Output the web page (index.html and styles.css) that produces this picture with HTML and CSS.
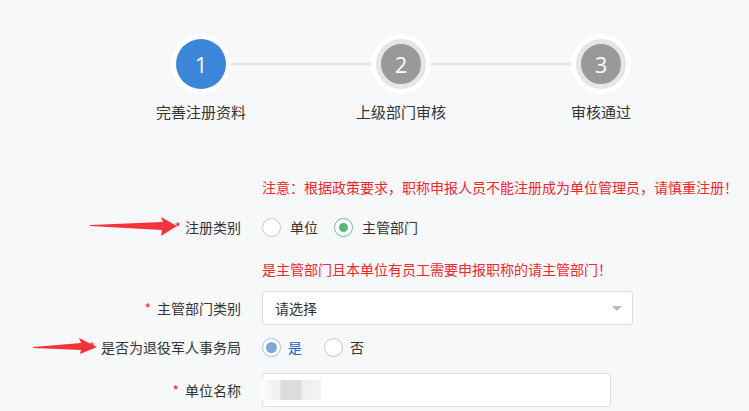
FILE: index.html
```html
<!DOCTYPE html>
<html lang="zh-CN">
<head>
    <meta charset="UTF-8">
    <meta name="viewport" content="width=device-width, initial-scale=1.0">
    <title>注册</title>
    <link rel="stylesheet" href="styles.css">
</head>
<body>
    <div class="steps">
        <div class="steps-track">
            <div class="step-dot active">1</div>
            <div class="step-line"></div>
            <div class="step-dot">2</div>
            <div class="step-line"></div>
            <div class="step-dot">3</div>
        </div>
        <div class="steps-labels">
            <span>完善注册资料</span>
            <span>上级部门审核</span>
            <span>审核通过</span>
        </div>
    </div>

    <form class="reg-form">
        <p class="tip tip-notice">注意：根据政策要求，职称申报人员不能注册成为单位管理员，请慎重注册！</p>

        <div class="form-row row-type">
            <label class="form-label"><i class="star-top">*</i>注册类别</label>
            <div class="form-control radios">
                <span class="radio"><span class="radio-dot"></span>单位</span>
                <span class="radio checked-green"><span class="radio-dot"></span>主管部门</span>
            </div>
        </div>

        <p class="tip tip-hint">是主管部门且本单位有员工需要申报职称的请主管部门！</p>

        <div class="form-row row-select">
            <label class="form-label"><i>*</i>主管部门类别</label>
            <div class="form-control">
                <div class="select-box">
                    <span>请选择</span>
                    <span class="caret"></span>
                </div>
            </div>
        </div>

        <div class="form-row row-veteran">
            <label class="form-label"><i>*</i>是否为退役军人事务局</label>
            <div class="form-control radios radios-wide">
                <span class="radio checked-blue"><span class="radio-dot"></span>是</span>
                <span class="radio"><span class="radio-dot"></span>否</span>
            </div>
        </div>

        <div class="form-row row-name">
            <label class="form-label"><i>*</i>单位名称</label>
            <div class="form-control">
                <div class="text-box">
                    <span class="blur"></span>
                </div>
            </div>
        </div>
    </form>

    <!-- annotation arrows -->
    <svg class="arrow arrow-1" width="100" height="30" viewBox="0 0 100 30">
        <polygon points="0,9 73,6 71,1 87,10 71,20 72,14 0,10" fill="#f5333a"/>
    </svg>
    <svg class="arrow arrow-2" width="80" height="30" viewBox="0 0 80 30">
        <polygon points="0,11 48,7 46,2 64,11 47,18 48,14 0,12" fill="#f5333a"/>
    </svg>
</body>
</html>
```

FILE: styles.css
```css
:root {
    --blue: #3b86d9;
    --gray: #999;
    --ring: #e6e6e6;
    --red: #f2262f;
    --text: #333;
    --border: #dcdcdc;
}

* {
    margin: 0;
    padding: 0;
    box-sizing: border-box;
}

body {
    position: relative;
    background-color: #f7f8fa;
    color: var(--text);
    font-family: "Noto Sans CJK SC", "Noto Sans", sans-serif;
    font-size: 14px;
    line-height: 20px;
    width: 749px;
    height: 411px;
    overflow: hidden;
}

/* steps */
.steps {
    width: 600px;
    margin-left: 101px;
    padding-top: 34px;
}

.steps-track {
    display: flex;
    align-items: center;
    padding: 0 70px;
    height: 60px;
}

.step-dot {
    width: 50px;
    height: 50px;
    margin: 5px;
    border-radius: 50%;
    background-color: var(--gray);
    border: 5px solid var(--ring);
    box-shadow: 0 0 0 5px #fff;
    color: #fff;
    font-family: "Open Sans", "Noto Sans", sans-serif;
    font-size: 22px;
    display: flex;
    justify-content: center;
    align-items: center;
}

.step-dot.active {
    background-color: var(--blue);
    border: none;
}

.step-line {
    flex: 1;
    height: 2px;
    background-color: #e3e3e5;
}

.steps-labels {
    display: grid;
    grid-template-columns: repeat(3, 200px);
    margin-top: 8px;
    font-size: 15px;
    text-align: center;
}

/* form */
.reg-form {
    margin-top: 55px;
}

.tip {
    color: var(--red);
    padding-left: 262px;
    white-space: nowrap;
}

.form-row {
    display: flex;
    align-items: center;
    height: 34px;
}

.form-label {
    width: 241px;
    text-align: right;
    white-space: nowrap;
}

.form-label i {
    font-style: normal;
    color: var(--red);
    margin-right: 6px;
}

.form-label .star-top {
    position: relative;
    z-index: 1;
    margin-right: 4px;
}

.form-control {
    margin-left: 21px;
}

.row-type {
    margin-top: 13px;
}

.tip-hint {
    margin-top: 15px;
}

.row-select {
    margin-top: 12px;
}

.row-veteran {
    margin-top: 5px;
}

.row-name {
    margin-top: 9px;
}

/* radios */
.radios {
    display: flex;
    gap: 16px;
}

.radio {
    display: flex;
    align-items: center;
    gap: 9px;
}

.radios-wide {
    gap: 22px;
}

.radios-wide .radio {
    gap: 7px;
}

.radio-dot {
    width: 19px;
    height: 19px;
    border-radius: 50%;
    border: 1px solid #c8c8c8;
    background-color: #fff;
    display: flex;
    justify-content: center;
    align-items: center;
}

.checked-green .radio-dot {
    border-color: #6cc38a;
}

.checked-green .radio-dot::after {
    content: "";
    width: 9px;
    height: 9px;
    border-radius: 50%;
    background-color: #5cb87a;
}

.checked-blue {
    color: #1d5fc9;
}

.checked-blue .radio-dot {
    border-color: #a3bfe6;
}

.checked-blue .radio-dot::after {
    content: "";
    width: 11px;
    height: 11px;
    border-radius: 50%;
    background-color: #80a5d9;
}

/* inputs */
.select-box {
    width: 371px;
    height: 34px;
    background-color: #fff;
    border: 1px solid var(--border);
    border-radius: 3px;
    display: flex;
    align-items: center;
    justify-content: space-between;
    padding: 0 10px 0 12px;
}

.caret {
    width: 0;
    height: 0;
    border-left: 5px solid transparent;
    border-right: 5px solid transparent;
    border-top: 5px solid #bbb;
}

.text-box {
    width: 349px;
    height: 34px;
    background-color: #fff;
    border: 1px solid var(--border);
    border-radius: 3px;
    display: flex;
    align-items: center;
}

.blur {
    width: 60px;
    height: 20px;
    margin-left: -2px;
    background: linear-gradient(90deg, #fff 0, #f1f1f1 12px, #f1f1f1 19px, #dcdcdc 20px, #dcdcdc 40px, #eeeeee 41px, #f4f4f4 60px);
}

/* annotation arrows */
.arrow {
    position: absolute;
}

.arrow-1 {
    left: 90px;
    top: 216px;
}

.arrow-2 {
    left: 33px;
    top: 336px;
}
```
